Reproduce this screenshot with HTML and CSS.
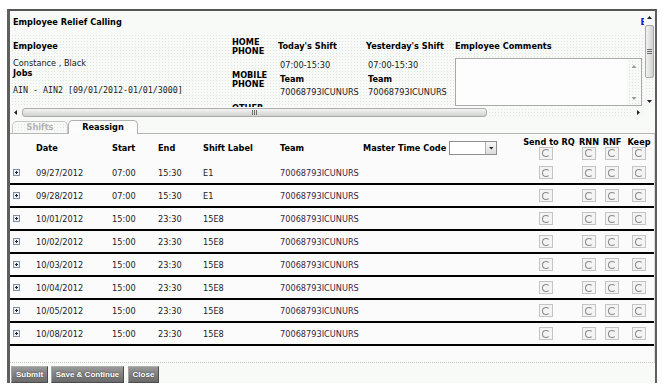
FILE: index.html
```html
<!DOCTYPE html>
<html lang="en">
<head>
    <meta charset="UTF-8">
    <title>Employee Relief Calling</title>
    <link rel="stylesheet" href="styles.css">
</head>
<body>
<div class="window">
    <div class="top">
        <div class="top-main">
            <div class="top-view">
                <div class="title-row">
                    <span class="title">Employee Relief Calling</span>
                    <span class="cut-link">E</span>
                </div>
                <div class="info dotted">
                    <div class="col col-emp">
                        <div class="lbl">Employee</div>
                        <div class="emp-name">Constance , Black</div>
                        <div class="jobs-lbl">Jobs</div>
                        <div class="job">AIN - AIN2 [09/01/2012-01/01/3000]</div>
                    </div>
                    <div class="col col-phone">
                        <div class="phone-lbl">HOME PHONE</div>
                        <div class="phone-lbl">MOBILE PHONE</div>
                        <div class="phone-lbl">OTHER PHONE</div>
                    </div>
                    <div class="col col-shift">
                        <div class="lbl">Today's Shift</div>
                        <div class="shift-time">07:00-15:30</div>
                        <div class="team-lbl">Team</div>
                        <div class="team-val">70068793ICUNURS</div>
                    </div>
                    <div class="col col-shift yest">
                        <div class="lbl">Yesterday's Shift</div>
                        <div class="shift-time">07:00-15:30</div>
                        <div class="team-lbl">Team</div>
                        <div class="team-val">70068793ICUNURS</div>
                    </div>
                    <div class="col col-comments">
                        <div class="lbl">Employee Comments</div>
                        <div class="comment-box">
                            <div class="comment-scroll dotted">
                                <span class="tri tri-up light"></span>
                                <span class="tri tri-down light"></span>
                            </div>
                        </div>
                    </div>
                </div>
            </div>
            <div class="vscroll dotted">
                <div class="arrow-box"><span class="tri tri-up"></span></div>
                <div class="vthumb"><span class="grip-v"></span></div>
                <div class="spacer"></div>
                <div class="arrow-box"><span class="tri tri-down"></span></div>
            </div>
        </div>
        <div class="hscroll">
            <div class="arrow-box-h"><span class="tri tri-left"></span></div>
            <div class="hthumb"><span class="grip-h"></span></div>
            <div class="htrack dotted"></div>
            <div class="arrow-box-h"><span class="tri tri-right"></span></div>
            <div class="corner"></div>
        </div>
    </div>

    <div class="tabs">
        <div class="tab dotted">Shifts</div>
        <div class="tab active">Reassign</div>
    </div>

    <div class="grid">
        <div class="head-row">
            <div></div>
            <div>Date</div>
            <div>Start</div>
            <div>End</div>
            <div>Shift Label</div>
            <div>Team</div>
            <div class="mtc">Master Time Code
                <span class="select"><span class="select-btn"><span class="tri tri-down"></span></span></span>
            </div>
            <div class="rcell send"><span>Send to RQ</span><span class="radio"></span></div>
            <div class="rcell"><span>RNN</span><span class="radio"></span></div>
            <div class="rcell"><span>RNF</span><span class="radio"></span></div>
            <div class="rcell"><span>Keep</span><span class="radio"></span></div>
        </div>

        <div class="row">
            <div><svg class="expand" width="7" height="7"><rect x=".5" y=".5" width="6" height="6" fill="#eef2f6" stroke="#7f8fa6"/><path d="M2 3.5h3M3.5 2v3" stroke="#223"/></svg></div>
            <div>09/27/2012</div><div>07:00</div><div>15:30</div><div>E1</div>
            <div class="team">70068793ICUNURS</div><div></div>
            <div class="rcell send"><span class="radio"></span></div>
            <div class="rcell"><span class="radio"></span></div>
            <div class="rcell"><span class="radio"></span></div>
            <div class="rcell"><span class="radio"></span></div>
        </div>
        <div class="row">
            <div><svg class="expand" width="7" height="7"><rect x=".5" y=".5" width="6" height="6" fill="#eef2f6" stroke="#7f8fa6"/><path d="M2 3.5h3M3.5 2v3" stroke="#223"/></svg></div>
            <div>09/28/2012</div><div>07:00</div><div>15:30</div><div>E1</div>
            <div class="team">70068793ICUNURS</div><div></div>
            <div class="rcell send"><span class="radio"></span></div>
            <div class="rcell"><span class="radio"></span></div>
            <div class="rcell"><span class="radio"></span></div>
            <div class="rcell"><span class="radio"></span></div>
        </div>
        <div class="row">
            <div><svg class="expand" width="7" height="7"><rect x=".5" y=".5" width="6" height="6" fill="#eef2f6" stroke="#7f8fa6"/><path d="M2 3.5h3M3.5 2v3" stroke="#223"/></svg></div>
            <div>10/01/2012</div><div>15:00</div><div>23:30</div><div>15E8</div>
            <div class="team">70068793ICUNURS</div><div></div>
            <div class="rcell send"><span class="radio"></span></div>
            <div class="rcell"><span class="radio"></span></div>
            <div class="rcell"><span class="radio"></span></div>
            <div class="rcell"><span class="radio"></span></div>
        </div>
        <div class="row">
            <div><svg class="expand" width="7" height="7"><rect x=".5" y=".5" width="6" height="6" fill="#eef2f6" stroke="#7f8fa6"/><path d="M2 3.5h3M3.5 2v3" stroke="#223"/></svg></div>
            <div>10/02/2012</div><div>15:00</div><div>23:30</div><div>15E8</div>
            <div class="team">70068793ICUNURS</div><div></div>
            <div class="rcell send"><span class="radio"></span></div>
            <div class="rcell"><span class="radio"></span></div>
            <div class="rcell"><span class="radio"></span></div>
            <div class="rcell"><span class="radio"></span></div>
        </div>
        <div class="row">
            <div><svg class="expand" width="7" height="7"><rect x=".5" y=".5" width="6" height="6" fill="#eef2f6" stroke="#7f8fa6"/><path d="M2 3.5h3M3.5 2v3" stroke="#223"/></svg></div>
            <div>10/03/2012</div><div>15:00</div><div>23:30</div><div>15E8</div>
            <div class="team">70068793ICUNURS</div><div></div>
            <div class="rcell send"><span class="radio"></span></div>
            <div class="rcell"><span class="radio"></span></div>
            <div class="rcell"><span class="radio"></span></div>
            <div class="rcell"><span class="radio"></span></div>
        </div>
        <div class="row">
            <div><svg class="expand" width="7" height="7"><rect x=".5" y=".5" width="6" height="6" fill="#eef2f6" stroke="#7f8fa6"/><path d="M2 3.5h3M3.5 2v3" stroke="#223"/></svg></div>
            <div>10/04/2012</div><div>15:00</div><div>23:30</div><div>15E8</div>
            <div class="team">70068793ICUNURS</div><div></div>
            <div class="rcell send"><span class="radio"></span></div>
            <div class="rcell"><span class="radio"></span></div>
            <div class="rcell"><span class="radio"></span></div>
            <div class="rcell"><span class="radio"></span></div>
        </div>
        <div class="row">
            <div><svg class="expand" width="7" height="7"><rect x=".5" y=".5" width="6" height="6" fill="#eef2f6" stroke="#7f8fa6"/><path d="M2 3.5h3M3.5 2v3" stroke="#223"/></svg></div>
            <div>10/05/2012</div><div>15:00</div><div>23:30</div><div>15E8</div>
            <div class="team">70068793ICUNURS</div><div></div>
            <div class="rcell send"><span class="radio"></span></div>
            <div class="rcell"><span class="radio"></span></div>
            <div class="rcell"><span class="radio"></span></div>
            <div class="rcell"><span class="radio"></span></div>
        </div>
        <div class="row">
            <div><svg class="expand" width="7" height="7"><rect x=".5" y=".5" width="6" height="6" fill="#eef2f6" stroke="#7f8fa6"/><path d="M2 3.5h3M3.5 2v3" stroke="#223"/></svg></div>
            <div>10/08/2012</div><div>15:00</div><div>23:30</div><div>15E8</div>
            <div class="team">70068793ICUNURS</div><div></div>
            <div class="rcell send"><span class="radio"></span></div>
            <div class="rcell"><span class="radio"></span></div>
            <div class="rcell"><span class="radio"></span></div>
            <div class="rcell"><span class="radio"></span></div>
        </div>
    </div>

    <div class="footer">
        <button class="btn btn-submit">Submit</button>
        <button class="btn btn-save">Save &amp; Continue</button>
        <button class="btn btn-close">Close</button>
    </div>
</div>
</body>
</html>
```

FILE: styles.css
```css
* { box-sizing: border-box; margin: 0; padding: 0; }
body {
    font-family: "DejaVu Sans", Verdana, sans-serif;
    font-size: 8.2px;
    color: #1a1a1a;
    background-color: #ffffff;
}
.window {
    margin: 9px 0 0 7px;
    width: 650px;
    height: 374px;
    border-top: 2px solid #555;
    border-left: 3px solid #5e5e5e;
    border-right: 2px solid #5e5e5e;
    background-color: #f8faf8;
    display: flex;
    flex-direction: column;
}
.dotted {
    background-color: #f8faf8;
    background-image:
        linear-gradient(90deg, #f8faf8 2px, transparent 2px),
        linear-gradient(#f8faf8 2px, #e1e4e1 2px);
    background-size: 3px 3px;
}

/* top panel */
.top { height: 107px; display: flex; flex-direction: column; }
.top-main { height: 96px; display: flex; }
.top-view { width: 634px; overflow: hidden; }
.title-row {
    height: 22px;
    display: flex;
    justify-content: space-between;
    align-items: center;
    padding-left: 3px;
}
.title { font-weight: bold; color: #000; }
.cut-link { color: #1414e6; font-weight: bold; margin-right: -2px; }
.info { height: 74px; display: flex; }
.col { flex-shrink: 0; }
.col-emp { width: 221px; padding: 7px 0 0 3px; }
.col-phone { width: 46px; padding: 4.5px 0 0 1px; }
.col-shift { width: 89px; padding: 7px 0 0 1px; }
.col-shift.yest { width: 88px; padding-left: 0; }
.col-comments { width: 190px; padding: 7px 0 0 1px; }
.lbl { font-weight: bold; line-height: 12px; color: #000; }
.emp-name { margin-top: 6px; line-height: 10px; }
.jobs-lbl { font-weight: bold; line-height: 10px; color: #000; }
.job {
    margin-top: 7px;
    line-height: 10px;
    font-family: "DejaVu Sans Mono", monospace;
    font-size: 8.3px;
}
.phone-lbl { font-weight: bold; line-height: 9.5px; color: #000; }
.phone-lbl + .phone-lbl { margin-top: 14px; }
.shift-time { margin-top: 7px; line-height: 12px; padding-left: 2px; }
.team-lbl { margin-top: 2px; line-height: 12px; padding-left: 2px; font-weight: bold; color: #000; }
.team-val { margin-top: 1px; line-height: 12px; padding-left: 2px; }
.yest .shift-time, .yest .team-lbl, .yest .team-val { padding-left: 2px; }
.comment-box {
    margin-top: 6px;
    width: 187px;
    height: 48px;
    border: 1px solid #a9a9a9;
    background-color: #fcfdfc;
    display: flex;
    justify-content: flex-end;
}
.comment-scroll {
    width: 14px;
    display: flex;
    flex-direction: column;
    justify-content: space-between;
    align-items: center;
    padding: 6px 0 5px;
}

/* scroll bits */
.tri { display: block; background-color: #222; }
.tri.light { background-color: #9a9a9a; }
.tri-up { width: 5px; height: 3px; clip-path: polygon(50% 0, 100% 100%, 0 100%); }
.tri-down { width: 5px; height: 3px; clip-path: polygon(0 0, 100% 0, 50% 100%); }
.tri-left { width: 3px; height: 5px; clip-path: polygon(100% 0, 100% 100%, 0 50%); }
.tri-right { width: 3px; height: 5px; clip-path: polygon(0 0, 100% 50%, 0 100%); }
.vscroll {
    width: 11px;
    padding-top: 1px;
    display: flex;
    flex-direction: column;
    align-items: center;
}
.arrow-box {
    width: 100%;
    height: 11px;
    display: flex;
    justify-content: center;
    align-items: center;
    background-color: #f6f7f6;
}
.vthumb {
    margin-top: 2px;
    width: 9px;
    height: 53px;
    border: 1px solid #aaa;
    border-radius: 2px;
    background: linear-gradient(90deg, #f2f2f2, #d2d2d2);
    display: flex;
    justify-content: center;
    align-items: center;
}
.grip-v {
    width: 5px;
    height: 5px;
    background: repeating-linear-gradient(#6e6e6e 0 1px, transparent 1px 2px);
}
.spacer { flex: 1; }
.hscroll { height: 11px; display: flex; }
.arrow-box-h {
    width: 11px;
    display: flex;
    justify-content: center;
    align-items: center;
    background-color: #f6f7f6;
}
.hthumb {
    margin: 1px 0 1px 1px;
    width: 465px;
    border: 1px solid #adadad;
    border-radius: 3px;
    background: linear-gradient(#f4f4f4, #d0d0d0);
    display: flex;
    justify-content: center;
    align-items: center;
}
.grip-h {
    width: 5px;
    height: 5px;
    background: repeating-linear-gradient(90deg, #6e6e6e 0 1px, transparent 1px 2px);
}
.htrack { flex: 1; }
.corner { width: 11px; }

/* tabs */
.tabs {
    height: 16px;
    display: flex;
    align-items: flex-end;
    padding-left: 2px;
    border-bottom: 1px solid #b6b6b6;
}
.tab {
    height: 12px;
    line-height: 11px;
    border: 1px solid #c6c6c6;
    border-bottom: none;
    border-radius: 5px 5px 0 0;
    font-weight: bold;
    text-align: center;
}
.tab:first-child { width: 56px; color: #b3b3b3; }
.tab.active {
    width: 70px;
    height: 14px;
    line-height: 13px;
    margin-bottom: -1px;
    border-color: #b0b0b0;
    background-color: #fbfcfb;
    color: #000;
}

/* reassign grid */
.grid {
    height: 228px;
    background-color: #fafbfa;
    border-right: 1px solid #dadada;
}
.head-row, .row {
    display: grid;
    grid-template-columns: 26px 76px 46px 45px 77px 83px 157px 58px 22px 24px 1fr;
    align-items: center;
}
.head-row { height: 28px; font-weight: bold; color: #000; }
.row {
    height: 23px;
    border-bottom: 2px solid #000;
    color: #222;
}
.row .team { color: #3a1f46; }
.expand { display: block; margin-left: 3px; }
.mtc { display: flex; align-items: center; gap: 3px; white-space: nowrap; }
.select {
    width: 48px;
    height: 14px;
    border: 1px solid #8f8f8f;
    background-color: #fff;
    display: flex;
    justify-content: flex-end;
}
.select-btn {
    width: 11px;
    border-left: 1px solid #b0b0b0;
    background: linear-gradient(#f7f7f7, #dcdcdc);
    display: flex;
    justify-content: center;
    align-items: center;
}
.rcell {
    display: flex;
    flex-direction: column;
    align-items: center;
    line-height: 10px;
    white-space: nowrap;
}
.send .radio { margin-right: 6px; }
.radio {
    width: 14px;
    height: 13px;
    border: 1px solid #c4c4c4;
    background-color: #f3f4f3;
    display: flex;
    justify-content: center;
    align-items: center;
}
.radio::before {
    content: "";
    width: 6px;
    height: 6px;
    border-radius: 50%;
    border: 1px solid #8a8a8a;
    border-right-color: transparent;
}

/* buttons */
.footer {
    border-top: 1px dotted #c8c8c8;
    padding: 3px 0 0 1px;
    display: flex;
    gap: 3px;
}
.btn {
    height: 17px;
    font-family: "Liberation Sans", Arial, sans-serif;
    font-size: 8px;
    font-weight: bold;
    color: #fff;
    text-shadow: 0 0 2px #333;
    background: linear-gradient(#999, #6a6a6a);
    border: 1px solid #4c4c4c;
    border-top-color: #b0b0b0;
    border-left-color: #a4a4a4;
    cursor: pointer;
}
.btn-submit { width: 37px; }
.btn-save { width: 73px; }
.btn-close { width: 31px; margin-left: 1px; }
```
